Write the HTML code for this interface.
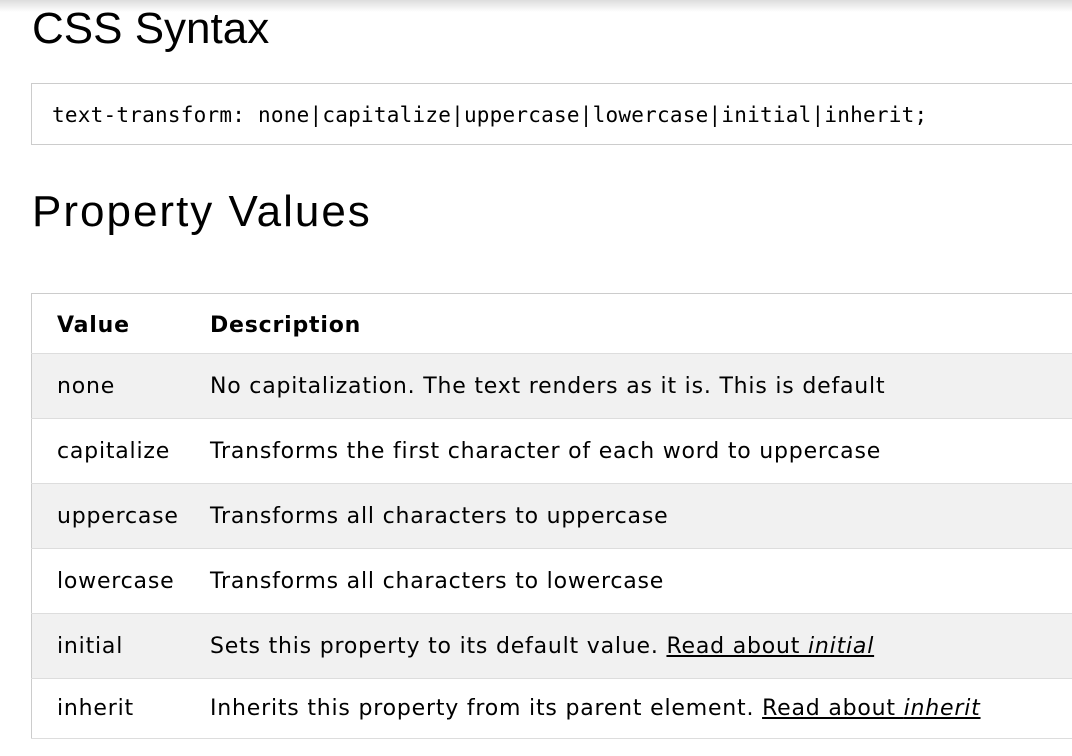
<!DOCTYPE html>
<html><head><style>
html,body{margin:0;padding:0;background:#fff;width:1072px;height:756px;overflow:hidden;position:relative;font-family:"DejaVu Sans",Verdana,sans-serif;color:#000}
.shadow{position:absolute;left:0;top:0;width:1072px;height:12px;background:linear-gradient(#ddd,rgba(255,255,255,0))}
h1{position:absolute;left:32px;margin:0;font-family:"Liberation Sans",sans-serif;font-weight:normal;font-size:44px;line-height:1}
.code{position:absolute;left:31px;top:83px;width:1100px;height:62px;border:1px solid #ccc;box-sizing:border-box}
.code span{position:absolute;left:20px;top:19px;font-family:"DejaVu Sans Mono",monospace;font-size:21px;letter-spacing:0.23px;white-space:nowrap}
table{position:absolute;left:31px;top:293px;width:1100px;border-collapse:collapse;border:1px solid #ccc;font-size:22px;letter-spacing:0.8px}
td,th{text-align:left;padding:0 0 0 25px;height:64px;border-bottom:1px solid #ddd;white-space:nowrap}
th{height:56px;padding-top:3px}
td:first-child,th:first-child{width:128px}
tr:nth-child(even) td{background:#f1f1f1}
tr.last td{height:59px}
a{color:#000;text-decoration:underline}
</style></head><body>
<div class="shadow"></div>
<h1 style="top:7px">CSS Syntax</h1>
<div class="code"><span>text-transform: none|capitalize|uppercase|lowercase|initial|inherit;</span></div>
<h1 style="top:190px;letter-spacing:2px">Property Values</h1>
<table>
<tr><th>Value</th><th>Description</th></tr>
<tr><td>none</td><td>No capitalization. The text renders as it is. This is default</td></tr>
<tr><td>capitalize</td><td>Transforms the first character of each word to uppercase</td></tr>
<tr><td>uppercase</td><td>Transforms all characters to uppercase</td></tr>
<tr><td>lowercase</td><td>Transforms all characters to lowercase</td></tr>
<tr><td>initial</td><td>Sets this property to its default value. <a>Read about <i>initial</i></a></td></tr>
<tr class="last"><td>inherit</td><td>Inherits this property from its parent element. <a>Read about <i>inherit</i></a></td></tr>
</table>
</body></html>
